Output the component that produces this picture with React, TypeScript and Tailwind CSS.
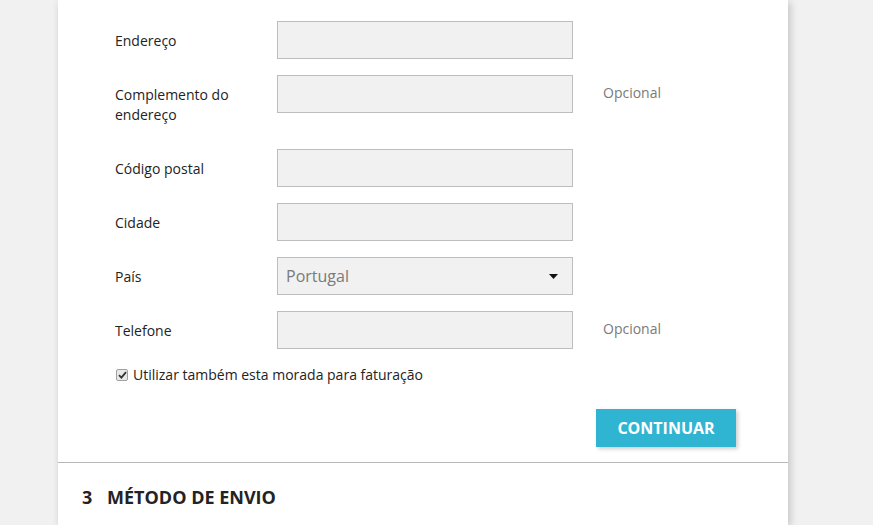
import React from "react";

const font = { fontFamily: '"Open Sans", "Noto Sans", sans-serif' };

function Row({
  label,
  optional,
  children,
}: {
  label: React.ReactNode;
  optional?: boolean;
  children?: React.ReactNode;
}) {
  return (
    <div className="flex items-start mb-4">
      <div className="w-[162px] pt-[10px] pb-[8px] text-[14px] leading-5 text-[#232323] pr-4">
        {label}
      </div>
      <div className="w-[296px] shrink-0">
        {children ?? (
          <div className="h-[38px] bg-[#f1f1f1] border border-[#bdbdbd]" />
        )}
      </div>
      {optional && (
        <div className="pl-[30px] pt-[8px] text-[14px] leading-5 text-[#7a7a7a]">
          Opcional
        </div>
      )}
    </div>
  );
}

export default function App() {
  return (
    <div className="min-h-[525px] w-full bg-[#f1f1f1] overflow-hidden" style={font}>
      <div className="ml-[58px] w-[730px] bg-white shadow-[2px_2px_8px_0_rgba(0,0,0,0.2)] min-h-[525px]">
        <div className="pt-[21px] pl-[57px] pr-[52px] pb-[15px] border-b border-[#b8b8b8]">
          <Row label="Endereço" />
          <Row label={<>Complemento do<br />endereço</>} optional />
          <Row label="Código postal" />
          <Row label="Cidade" />
          <Row label="País">
            <div className="h-[38px] bg-[#f1f1f1] border border-[#bdbdbd] flex items-center justify-between pl-[8px] pr-[14px]">
              <span className="text-[16px] text-[#7a7a7a]">Portugal</span>
              <svg width="9" height="5" viewBox="0 0 9 5">
                <path d="M0 0 L9 0 L4.5 5 Z" fill="#111" />
              </svg>
            </div>
          </Row>
          <Row label="Telefone" optional />
          <div className="flex items-center mt-[2px] text-[14px] leading-5 text-[#232323]">
            <span className="w-[12px] h-[12px] mr-[5px] ml-[1px] rounded-[2px] border border-[#a0a0a0] bg-[#e8e8e8] flex items-center justify-center">
              <svg width="9" height="8" viewBox="0 0 9 8">
                <path d="M1 4.2 L3.4 6.6 L8 1.2" stroke="#333" strokeWidth="1.8" fill="none" />
              </svg>
            </span>
            Utilizar também esta morada para faturação
          </div>
          <div className="flex justify-end mt-[24px]">
            <button className="w-[140px] h-[38px] bg-[#2fb5d2] text-white font-bold text-[16px] shadow-[2px_2px_4px_0_rgba(0,0,0,0.2)]">
              CONTINUAR
            </button>
          </div>
        </div>
        <div className="pl-[24px] pt-[22px] flex items-center text-[18px] font-bold text-[#232323] leading-6">
          <span className="w-[25px]">3</span>
          <span>MÉTODO DE ENVIO</span>
        </div>
      </div>
    </div>
  );
}
